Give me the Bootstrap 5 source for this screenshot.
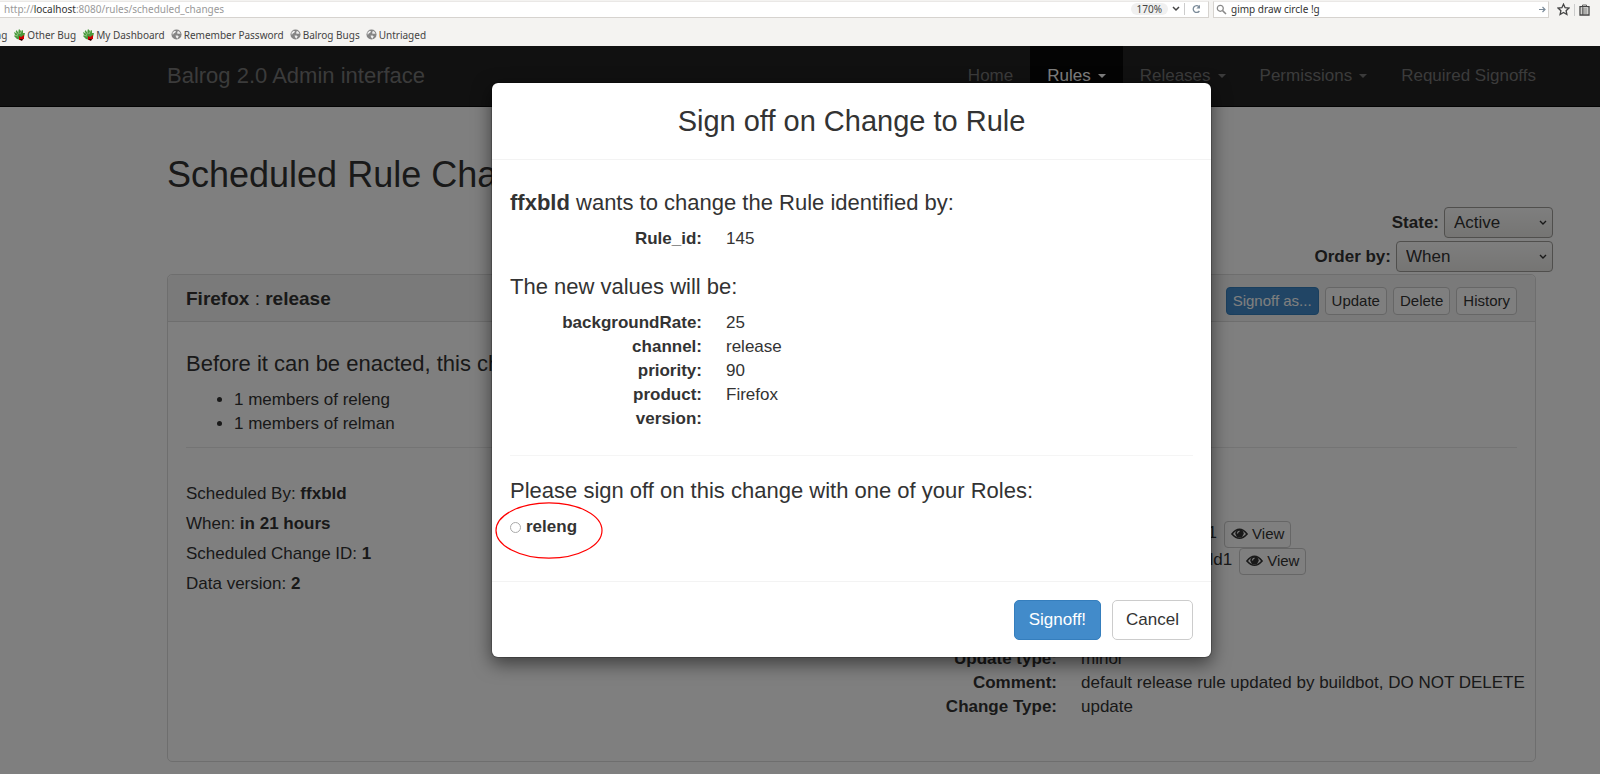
<!DOCTYPE html>
<html lang="en">
<head>
<meta charset="utf-8">
<meta name="viewport" content="width=device-width, initial-scale=1">
<title>Balrog 2.0 Admin interface</title>
<link href="https://cdn.jsdelivr.net/npm/bootstrap@5.3.0/dist/css/bootstrap.min.css" rel="stylesheet">
<style>
  body { font: 17px/24px "Liberation Sans", Arial, sans-serif; color: #333; background: #fff; }

  /* Browser toolbar and bookmarks */
  .chrome { background: #f4f3f1; height: 46px; font: 11px/14px "Noto Sans", sans-serif; color: #444; overflow: hidden; }
  .chrome-row { height: 18px; padding-top: 1px; }
  .url-box, .find-box { background: #fff; border: 1px solid #d6d3cf; border-top-color: #eae8e6; height: 17px; padding-bottom: 1px; }
  .url-box { border-left: 0; padding-left: 4px; color: #999; font-size: 10px; }
  .url-box b { color: #333; font-weight: 400; }
  .zoom-pill { background: #f0f0f0; border-radius: 7px; padding: 0 6px; line-height: 12px; color: #444; }
  .reload { margin-left: 7px; margin-right: 7px; }
  .find-box { width: 336px; padding: 0 2px 1px; }
  .find-box input { border: 0; padding: 0; background: none; outline: 0; font-size: 10px; line-height: 14px; color: #333; height: 14px; }
  .tool-icons { width: 51px; padding-left: 8px; }
  .vline { width: 1px; height: 12px; background: #ccc; }
  .bookmarks { height: 28px; padding-top: 5px; margin-left: -5px; gap: 6px; font-size: 10px; }
  .bookmarks a { color: #444; gap: 2px; }

  /* Page */
  .page { padding-left: 103px; overflow: hidden; }
  .wrap { max-width: 1405px; padding: 0 18px; margin: 0 auto; }
  .topbar { background: #222; border-bottom: 1px solid #080808; margin-left: -103px; padding: 0 0 0 103px; }
  .topbar .navbar-brand { color: #777; font-size: 22px; line-height: 24px; padding: 18px 0; margin: 0; }
  .topbar .navbar-nav .nav-link { color: #777; padding: 18px 17px; }
  .topbar .navbar-nav .nav-link.active { color: #fff; background: #080808; }
  .topbar .dropdown-toggle::after { border-width: 4px 4px 0; margin-left: 7px; vertical-align: 3px; }
  .topbar .navbar-nav { margin-right: -17px; }
  h1 { font-size: 36px; line-height: 40px; font-weight: 400; margin: 48px 0 12px; }
  h3 { font-size: 22px; line-height: 24px; font-weight: 400; margin: 0 0 12px; }
  .filters { gap: 3px; margin: 0 -17px 2px 0; }
  .filters label { font-weight: 700; margin-right: 5px; }
  .filters select { height: 31px; border: 1px solid #a09e9a; border-radius: 4px; padding: 0 9px; color: #333; appearance: none; line-height: 24px;
    background: url("data:image/svg+xml,%3Csvg xmlns='http://www.w3.org/2000/svg' viewBox='0 0 8 6'%3E%3Cpath d='M1 1l3 3 3-3' fill='none' stroke='%23333' stroke-width='1.4'/%3E%3C/svg%3E") no-repeat right 5px center / 8px 6px, linear-gradient(#fdfdfd, #ebeae7); }
  .pick-state { width: 109px; }
  .pick-order { width: 157px; }
  .rule-card { border: 1px solid #ddd; border-radius: 5px; color: #333; }
  .rule-card .card-header { background: #f5f5f5; border-color: #ddd; padding: 12px 18px 6px; }
  .rule-card .card-header .tools { gap: 6px; }
  .rule-card h2 { font-size: 19px; line-height: 24px; margin: 0; font-weight: 700; }
  .rule-card .card-body { padding: 30px 18px 42px; }
  .rule-card ul { padding-left: 48px; margin-bottom: 11px; }
  .btn { --bs-btn-font-size: 17px; --bs-btn-line-height: 24px; --bs-btn-padding-x: 14px; --bs-btn-padding-y: 7px; --bs-btn-border-radius: 5px; }
  .btn-sm { --bs-btn-font-size: 15px; --bs-btn-line-height: 18px; --bs-btn-padding-x: 6px; --bs-btn-padding-y: 4px; --bs-btn-border-radius: 4px; }
  .btn-view { margin-left: 7px; height: 27px; gap: 4px; padding-top: 3px; }
  .btn-primary { --bs-btn-bg: #428bca; --bs-btn-border-color: #357ebd; }
  .btn-plain { --bs-btn-bg: #fff; --bs-btn-border-color: #ccc; --bs-btn-color: #333; }
  hr { border-top: 1px solid #e8e8e8; opacity: 1; margin: 0; }
  .facts { padding-top: 34px; }
  .facts p { margin-bottom: 6px; }
  .detail { padding-top: 25px; width: 652px; }
  dl { display: grid; grid-template-columns: 192px 1fr; column-gap: 24px; margin: 0; }
  dt { text-align: right; }
  dd { margin: 0; }

  /* Sign off dialog */
  .signoff { z-index: 5; padding-left: 103px; background: rgba(0, 0, 0, .5); overflow: hidden; }
  .signoff .modal-dialog { max-width: 721px; margin: 36px auto 0; }
  .signoff .modal-content { border: 1px solid rgba(0, 0, 0, .2); background-clip: padding-box; border-radius: 7px; box-shadow: 0 6px 18px rgba(0, 0, 0, .5); color: #333; }
  .signoff .modal-header { padding: 22px 18px; border-color: #f3f3f3; }
  .signoff .modal-title { font-size: 29px; line-height: 32px; font-weight: 400; }
  .signoff .modal-body { padding: 31px 18px 42px; }
  .signoff .modal-footer { padding: 18px 18px 17px; gap: 11px; border-color: #f3f3f3; }
  .signoff .modal-footer .btn-plain { --bs-btn-padding-x: 13px; }
  .signoff dl { margin-bottom: 24px; }
  .signoff hr { border-color: #f5f5f5; margin-bottom: 23px; }
  .role { gap: 5px; font-weight: 700; }
  .role input { appearance: none; width: 11px; height: 11px; border: 1px solid #aaa; border-radius: 50%; margin: 0; background: #fff; }
  .ring { left: -15px; top: -13px; }
</style>
</head>
<body class="min-vh-100 d-flex flex-column">

<svg class="d-none">
  <symbol id="bug" viewBox="0 0 12 12">
    <path d="M1 3l2 1 0-3 2 2 1-3 2 2 2-1 0 3 2 0-1 4-3 3-4-1-3-3 1-1z" fill="#4a9a3c"/>
    <path d="M2 2l3 4M5 1l1 4M9 1L7 5M1 6l4 1" stroke="#bfe0b5" stroke-width=".6"/>
    <path d="M6 7l2 1 3-2v4l-3 1-2 0z" fill="#c00"/><path d="M7 10l3 0-1 2-2-1z" fill="#300"/>
  </symbol>
  <symbol id="globe" viewBox="0 0 12 12">
    <circle cx="6" cy="6" r="5.5" fill="#858585"/>
    <path d="M1.500 4l2.500-2 1.500.5-1 1.500-1.500 1-1 1.500zM7.500 2l2 1.200.8 2.300-1.800-.5-1 .8-.8-1.800zM5 7l2 0 1.500 1-1.500 2.500-1.500-1.500z" fill="#eee"/>
  </symbol>
  <symbol id="eye" viewBox="0 0 18 14">
    <path d="M1 7Q9-3 17 7 9 16 1 7z" fill="none" stroke="#333" stroke-width="1.7"/>
    <circle cx="9" cy="6.3" r="4.4" fill="#333"/><path d="M6.8 6.4Q7 4.3 9 4" fill="none" stroke="#fff" stroke-width="1.3"/>
  </symbol>
</svg>

<header class="chrome">
  <div class="chrome-row d-flex">
    <div class="url-box d-flex align-items-center flex-grow-1">
      <span class="me-auto">http://<b>localhost</b>:8080/rules/scheduled_changes</span>
      <span class="zoom-pill me-1">170%</span>
      <svg width="8" height="6" viewBox="0 0 8 6"><path d="M1 1l3 3 3-3" fill="none" stroke="#444" stroke-width="1.5"/></svg>
      <span class="vline ms-1"></span>
      <svg class="reload" width="9" height="10" viewBox="0 0 9 10"><path d="M7 2.6A3.4 3.4 0 1 0 7.4 7" fill="none" stroke="#7b8b99" stroke-width="1.3"/><path d="M8 .8v3.7H4.4z" fill="#7b8b99"/></svg>
    </div>
    <div class="find-box d-flex align-items-center ms-1">
      <svg class="me-1" width="11" height="11" viewBox="0 0 11 11"><circle cx="4.3" cy="4.3" r="3" fill="none" stroke="#888" stroke-width="1.2"/><path d="M6.6 6.6L10 10" stroke="#888" stroke-width="1.5"/></svg>
      <input class="flex-grow-1" type="text" value="gimp draw circle !g" aria-label="Search">
      <svg width="7" height="7" viewBox="0 0 7 7"><path d="M0 3.5h6M3.5 1L6 3.5 3.5 6" fill="none" stroke="#7b8b99" stroke-width="1.2"/></svg>
    </div>
    <div class="tool-icons d-flex align-items-center gap-1">
      <svg width="13" height="13" viewBox="0 0 13 13"><path d="M6.5 1.2l1.6 3.5 3.8.4-2.8 2.6.8 3.8-3.4-2-3.4 2 .8-3.8L1.1 5.1l3.8-.4z" fill="none" stroke="#444" stroke-width="1.3"/></svg>
      <span class="vline"></span>
      <svg width="11" height="12" viewBox="0 0 11 12"><path d="M1 2.600h9v8.400H1z" fill="none" stroke="#444" stroke-width="1.300"/><path d="M3.500 2.500V1h4v1.500M2.500 5h6M2.500 7h6M2.500 9h6M3.800 3v8" fill="none" stroke="#444" stroke-width=".8"/></svg>
    </div>
  </div>
  <nav class="bookmarks d-flex align-items-center" aria-label="Bookmarks">
    <a class="text-decoration-none" href="#">ng</a>
    <a class="d-flex align-items-center text-decoration-none" href="#"><svg width="12" height="12"><use href="#bug"/></svg>Other Bug</a>
    <a class="d-flex align-items-center text-decoration-none" href="#"><svg width="12" height="12"><use href="#bug"/></svg>My Dashboard</a>
    <a class="d-flex align-items-center text-decoration-none" href="#"><svg width="11" height="11"><use href="#globe"/></svg>Remember Password</a>
    <a class="d-flex align-items-center text-decoration-none" href="#"><svg width="11" height="11"><use href="#globe"/></svg>Balrog Bugs</a>
    <a class="d-flex align-items-center text-decoration-none" href="#"><svg width="11" height="11"><use href="#globe"/></svg>Untriaged</a>
  </nav>
</header>

<div class="page position-relative flex-grow-1">
  <nav class="topbar navbar navbar-expand">
    <div class="wrap w-100 d-flex justify-content-between">
      <a class="navbar-brand" href="#">Balrog 2.0 Admin interface</a>
      <div class="navbar-nav">
        <a class="nav-link" href="#">Home</a>
        <a class="nav-link active dropdown-toggle" href="#">Rules</a>
        <a class="nav-link dropdown-toggle" href="#">Releases</a>
        <a class="nav-link dropdown-toggle" href="#">Permissions</a>
        <a class="nav-link" href="#">Required Signoffs</a>
      </div>
    </div>
  </nav>

  <main class="wrap">
    <h1>Scheduled Rule Changes</h1>
    <div class="filters d-flex flex-column align-items-end">
      <div class="d-flex align-items-center"><label for="state">State:</label><select class="pick-state" id="state"><option>Active</option></select></div>
      <div class="d-flex align-items-center"><label for="order">Order by:</label><select class="pick-order" id="order"><option>When</option></select></div>
    </div>

    <section class="card rule-card">
      <div class="card-header d-flex justify-content-between align-items-start">
        <h2>Firefox <span class="fw-normal">:</span> release</h2>
        <div class="tools d-flex">
          <button type="button" class="btn btn-sm btn-primary">Signoff as...</button>
          <button type="button" class="btn btn-sm btn-plain">Update</button>
          <button type="button" class="btn btn-sm btn-plain">Delete</button>
          <button type="button" class="btn btn-sm btn-plain">History</button>
        </div>
      </div>
      <div class="card-body">
        <h3>Before it can be enacted, this change requires:</h3>
        <ul>
          <li>1 members of releng</li>
          <li>1 members of relman</li>
        </ul>
        <hr>
        <div class="d-flex justify-content-between">
          <div class="facts">
            <p>Scheduled By: <b>ffxbld</b></p>
            <p>When: <b>in 21 hours</b></p>
            <p>Scheduled Change ID: <b>1</b></p>
            <p>Data version: <b>2</b></p>
          </div>
          <dl class="detail">
            <dt>Rule ID:</dt><dd>145</dd>
            <dt>Product:</dt><dd>Firefox</dd>
            <dt>Mapping:</dt><dd class="d-flex">Firefox-dev-build1<button type="button" class="btn btn-sm btn-plain btn-view d-flex align-items-center"><svg width="17" height="14"><use href="#eye"/></svg>View</button></dd>
            <dt>Fallback:</dt><dd class="d-flex">Firefox-56.0b-build1<button type="button" class="btn btn-sm btn-plain btn-view d-flex align-items-center"><svg width="17" height="14"><use href="#eye"/></svg>View</button></dd>
            <dt>Channel:</dt><dd>release</dd>
            <dt>Rate:</dt><dd>25</dd>
            <dt>Priority:</dt><dd>90</dd>
            <dt>Update type:</dt><dd>minor</dd>
            <dt>Comment:</dt><dd class="text-nowrap">default release rule updated by buildbot, DO NOT DELETE</dd>
            <dt>Change Type:</dt><dd>update</dd>
          </dl>
        </div>
      </div>
    </section>
  </main>

  <div class="signoff modal d-block position-absolute" role="dialog" aria-labelledby="signoff-title">
    <div class="modal-dialog">
      <form class="modal-content">
        <div class="modal-header justify-content-center"><h2 class="modal-title" id="signoff-title">Sign off on Change to Rule</h2></div>
        <div class="modal-body">
          <h3><b>ffxbld</b> wants to change the Rule identified by:</h3>
          <dl><dt>Rule_id:</dt><dd>145</dd></dl>
          <h3>The new values will be:</h3>
          <dl>
            <dt>backgroundRate:</dt><dd>25</dd>
            <dt>channel:</dt><dd>release</dd>
            <dt>priority:</dt><dd>90</dd>
            <dt>product:</dt><dd>Firefox</dd>
            <dt>version:</dt><dd></dd>
          </dl>
          <hr>
          <h3>Please sign off on this change with one of your Roles:</h3>
          <div class="role position-relative d-flex align-items-center">
            <input type="radio" name="role" id="role-releng"><label for="role-releng">releng</label>
            <svg class="ring position-absolute pe-none" width="108" height="57" viewBox="0 0 108 57"><ellipse cx="54" cy="28.500" rx="53" ry="27.700" fill="none" stroke="#f00" stroke-width="1.200"/></svg>
          </div>
        </div>
        <div class="modal-footer">
          <button type="button" class="btn btn-primary m-0">Signoff!</button>
          <button type="button" class="btn btn-plain m-0">Cancel</button>
        </div>
      </form>
    </div>
  </div>
</div>

<script src="https://cdn.jsdelivr.net/npm/bootstrap@5.3.0/dist/js/bootstrap.bundle.min.js"></script>
</body>
</html>
